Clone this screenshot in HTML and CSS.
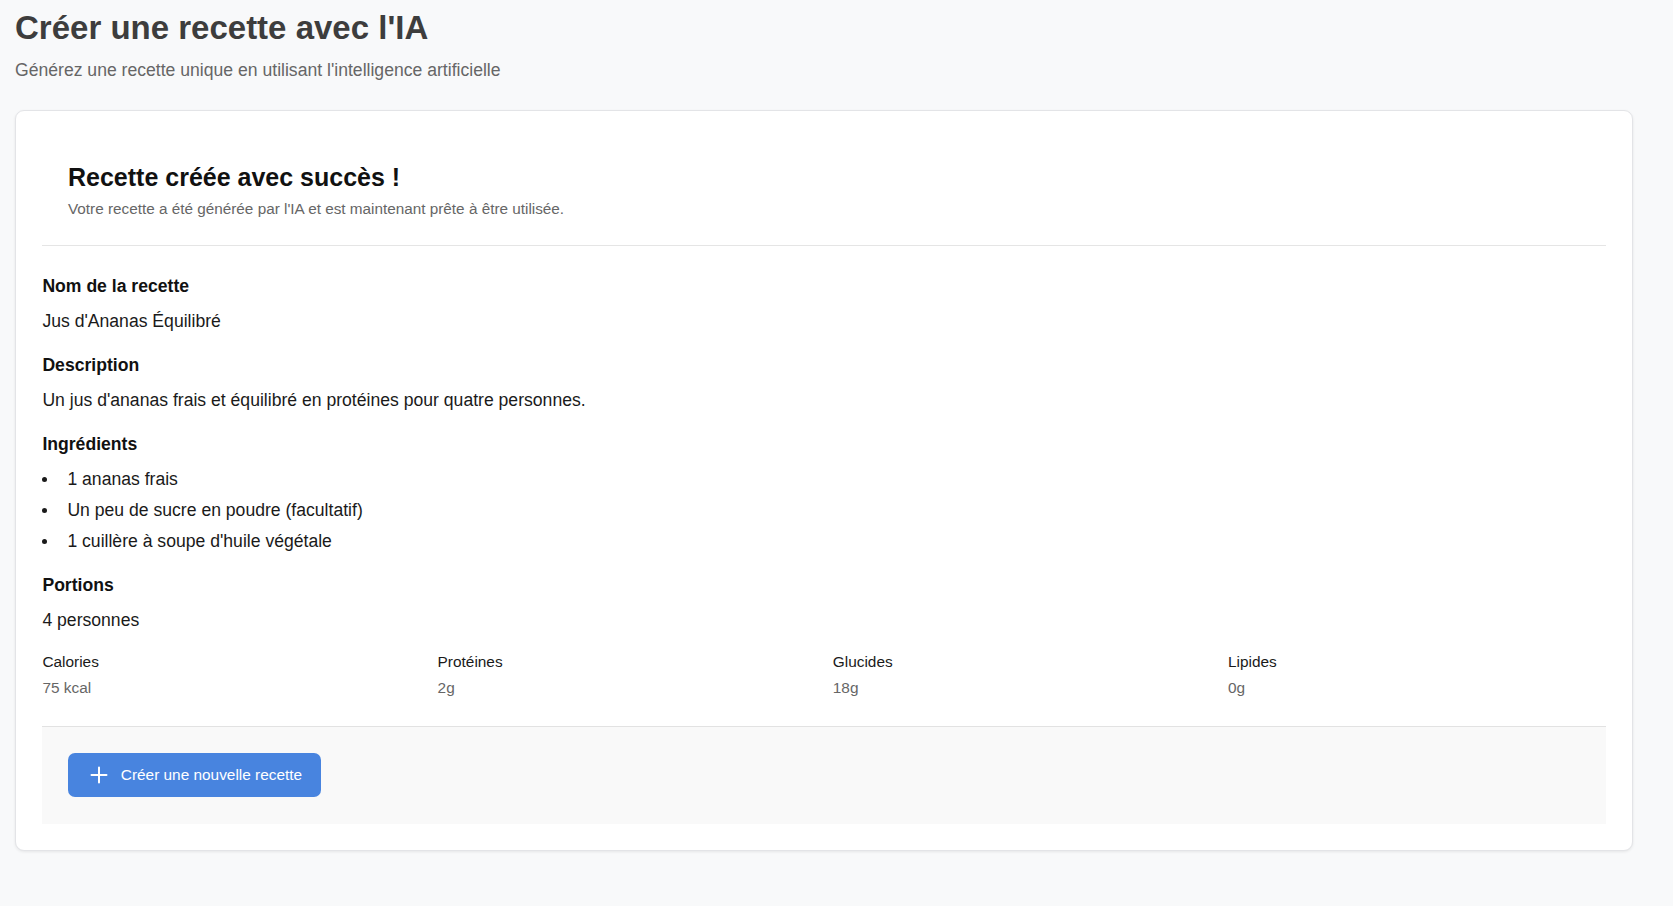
FILE: index.html
```html
<!DOCTYPE html>
<html lang="fr">
<head>
<meta charset="utf-8">
<title>Créer une recette avec l'IA</title>
<link rel="stylesheet" href="styles.css">
</head>
<body>
<main class="page">
  <h1 class="page-title">Créer une recette avec l'IA</h1>
  <p class="page-subtitle">Générez une recette unique en utilisant l'intelligence artificielle</p>

  <section class="card">
    <header class="card-header">
      <h2 class="card-title">Recette créée avec succès !</h2>
      <p class="card-subtitle">Votre recette a été générée par l'IA et est maintenant prête à être utilisée.</p>
    </header>

    <div class="card-body">
      <div class="field">
        <h3 class="field-label">Nom de la recette</h3>
        <p class="field-value">Jus d'Ananas Équilibré</p>
      </div>
      <div class="field">
        <h3 class="field-label">Description</h3>
        <p class="field-value">Un jus d'ananas frais et équilibré en protéines pour quatre personnes.</p>
      </div>
      <div class="field">
        <h3 class="field-label">Ingrédients</h3>
        <ul class="ingredients">
          <li>1 ananas frais</li>
          <li>Un peu de sucre en poudre (facultatif)</li>
          <li>1 cuillère à soupe d'huile végétale</li>
        </ul>
      </div>
      <div class="field">
        <h3 class="field-label">Portions</h3>
        <p class="field-value">4 personnes</p>
      </div>

      <div class="nutrition">
        <div class="nutri">
          <span class="nutri-label">Calories</span>
          <span class="nutri-value">75 kcal</span>
        </div>
        <div class="nutri">
          <span class="nutri-label">Protéines</span>
          <span class="nutri-value">2g</span>
        </div>
        <div class="nutri">
          <span class="nutri-label">Glucides</span>
          <span class="nutri-value">18g</span>
        </div>
        <div class="nutri">
          <span class="nutri-label">Lipides</span>
          <span class="nutri-value">0g</span>
        </div>
      </div>
    </div>

    <footer class="card-footer">
      <button class="btn-primary" type="button">
        <svg class="btn-icon" viewBox="0 0 24 24" width="24" height="24" fill="none" stroke="currentColor" stroke-width="2" stroke-linecap="round" aria-hidden="true">
          <path d="M12 4.5v15M4.5 12h15"/>
        </svg>
        <span>Créer une nouvelle recette</span>
      </button>
    </footer>
  </section>
</main>
</body>
</html>
```

FILE: styles.css
```css
* {
  box-sizing: border-box;
}

html, body {
  margin: 0;
  padding: 0;
}

body {
  background: #f8f9fa;
  font-family: "Liberation Sans", Arial, Helvetica, sans-serif;
  color: #111;
}

.page {
  padding: 9px 40px 40px 15px;
}

.page-title {
  margin: 0;
  font-size: 33px;
  line-height: 38px;
  font-weight: 700;
  color: #3d3d3d;
}

.page-subtitle {
  margin: 10px 0 0;
  font-size: 17.6px;
  line-height: 26.4px;
  color: #666;
}

.card {
  margin-top: 27px;
  background: #fff;
  border: 1px solid #e3e4e7;
  border-radius: 9px;
  box-shadow: 0 1px 3px rgba(0, 0, 0, 0.08);
  padding: 26.4px 26.4px 26px;
}

.card-header {
  padding: 26.4px 26.4px 25.5px 25.6px;
  border-bottom: 1px solid #e5e5e5;
}

.card-title {
  margin: 0;
  font-size: 25px;
  line-height: 27.5px;
  font-weight: 700;
  color: #111;
}

.card-subtitle {
  margin: 5.3px 0 0;
  font-size: 15.3px;
  line-height: 23px;
  color: #666;
}

.card-body {
  padding: 26.4px 0 27px;
}

.field {
  margin-bottom: 17.6px;
}

.field-label {
  margin: 0 0 8.8px;
  font-size: 17.6px;
  line-height: 26.4px;
  font-weight: 700;
  color: #111;
}

.field-value {
  margin: 0;
  font-size: 17.6px;
  line-height: 26.4px;
  color: #1a1a1a;
}

.ingredients {
  margin: 0;
  padding: 0;
  list-style: none;
  display: flex;
  flex-direction: column;
  gap: 4.4px;
}

.ingredients li {
  display: flex;
  align-items: center;
  gap: 20px;
  font-size: 17.6px;
  line-height: 26.4px;
  color: #1a1a1a;
}

.ingredients li::before {
  content: "";
  flex: none;
  width: 5px;
  height: 5px;
  border-radius: 50%;
  background: #1a1a1a;
}

.nutrition {
  display: grid;
  grid-template-columns: repeat(4, 1fr);
  gap: 17.6px;
}

.nutri {
  display: flex;
  flex-direction: column;
  gap: 3.5px;
}

.nutri-label {
  font-size: 15.4px;
  line-height: 22px;
  color: #1a1a1a;
}

.nutri-value {
  font-size: 15.4px;
  line-height: 22px;
  color: #666;
}

.card-footer {
  background: #f9f9f9;
  border-top: 1px solid #e2e2e2;
  padding: 26.5px 26.4px 27px 25.6px;
}

.btn-primary {
  display: inline-flex;
  align-items: center;
  gap: 9.8px;
  height: 44px;
  padding: 0 18.6px 0 19px;
  border: none;
  border-radius: 7px;
  background: #4884df;
  color: #fff;
  font-family: "Liberation Sans", Arial, Helvetica, sans-serif;
  font-size: 15.4px;
  line-height: 22px;
  cursor: pointer;
}

.btn-icon {
  display: block;
  flex: none;
  width: 24px;
  height: 24px;
}
```
